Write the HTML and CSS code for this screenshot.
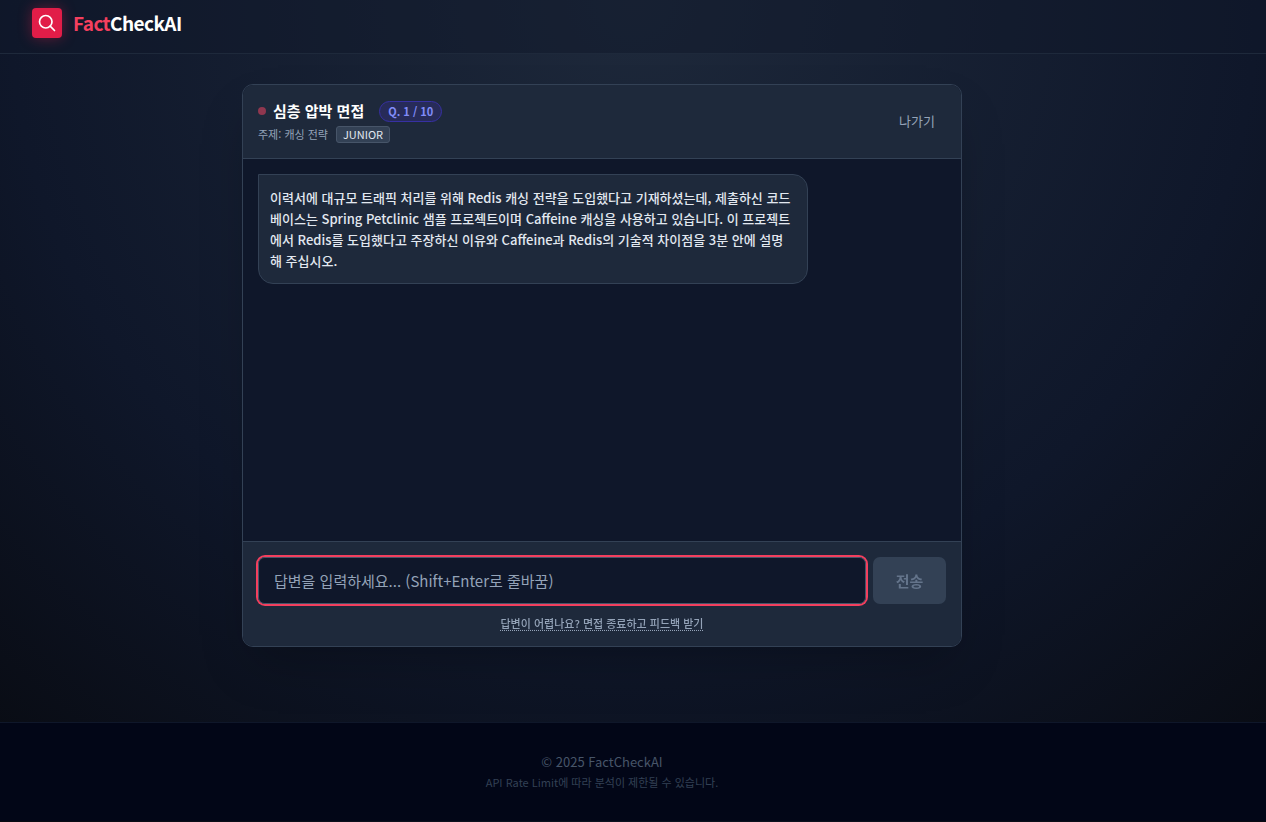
FILE: index.html
```
<!DOCTYPE html>
<html lang="ko">
<head>
  <meta charset="UTF-8">
  <meta name="viewport" content="width=device-width, initial-scale=1.0">
  <title>FactCheckAI</title>
  <link rel="stylesheet" href="styles.css">
</head>
<body>
  <header class="site-header">
    <a class="logo" href="#">
      <span class="logo-icon">
        <svg viewBox="0 0 24 24" width="20" height="20" fill="none" stroke="currentColor" stroke-width="2" stroke-linecap="round" stroke-linejoin="round">
          <circle cx="10.5" cy="10.5" r="7.5" />
          <path d="M21 21l-5.2-5.2" />
        </svg>
      </span>
      <span class="logo-text"><span class="accent">Fact</span>CheckAI</span>
    </a>
  </header>

  <main class="page">
    <section class="chat">
      <div class="chat-header">
        <div class="chat-info">
          <div class="title-row">
            <span class="dot"></span>
            <h1>심층 압박 면접</h1>
            <span class="counter">Q. 1 / 10</span>
          </div>
          <div class="topic-row">
            <span>주제: 캐싱 전략</span>
            <span class="level">JUNIOR</span>
          </div>
        </div>
        <button type="button" class="exit">나가기</button>
      </div>

      <div class="messages">
        <p class="bubble">이력서에 대규모 트래픽 처리를 위해 Redis 캐싱 전략을 도입했다고 기재하셨는데, 제출하신 코드베이스는 Spring Petclinic 샘플 프로젝트이며 Caffeine 캐싱을 사용하고 있습니다. 이 프로젝트에서 Redis를 도입했다고 주장하신 이유와 Caffeine과 Redis의 기술적 차이점을 3분 안에 설명해 주십시오.</p>
      </div>

      <form class="composer">
        <div class="input-row">
          <textarea rows="1" aria-label="답변" placeholder="답변을 입력하세요... (Shift+Enter로 줄바꿈)"></textarea>
          <button type="submit" class="send" disabled>전송</button>
        </div>
        <button type="button" class="finish">답변이 어렵나요? 면접 종료하고 피드백 받기</button>
      </form>
    </section>
  </main>

  <footer class="site-footer">
    <div class="footer-inner">
      <p>© 2025 FactCheckAI</p>
      <p class="note">API Rate Limit에 따라 분석이 제한될 수 있습니다.</p>
    </div>
  </footer>
</body>
</html>
```
FILE: styles.css
```
* {
  box-sizing: border-box;
}

body {
  margin: 0;
  padding-bottom: 2px;
  min-height: 100vh;
  display: flex;
  flex-direction: column;
  font-family: "Noto Sans CJK KR", "Noto Sans", sans-serif;
  color: #f1f5f9;
  background: radial-gradient(circle at top, #1e293b, #0f172a 60%, #080a10) no-repeat #080a10;
}

h1,
p {
  margin: 0;
}

button,
textarea {
  font-family: inherit;
}

button {
  border: 0;
  background: none;
  cursor: pointer;
}

/* Header */
.site-header {
  padding: 8px 32px 15px;
  background: rgba(15, 23, 42, 0.5);
  border-bottom: 1px solid #1e293b;
}

.logo {
  display: inline-flex;
  align-items: center;
  gap: 11px;
  height: 30px;
  vertical-align: top;
  color: #fff;
  text-decoration: none;
}

.logo-icon {
  display: flex;
  align-items: center;
  justify-content: center;
  width: 30px;
  height: 30px;
  border-radius: 4px;
  background: #e11d48;
  box-shadow: 0 0 14px rgba(225, 29, 72, 0.4);
}

.logo-text {
  font-size: 19px;
  font-weight: 700;
  line-height: 30px;
  letter-spacing: -0.03em;
}

.accent {
  color: #f43f5e;
}

/* Chat card */
.page {
  flex: 1;
  width: 100%;
  max-width: 1204px;
  padding: 30px 32px 75px;
}

.chat {
  display: flex;
  flex-direction: column;
  max-width: 720px;
  min-height: 563px;
  margin: 0 auto;
  overflow: hidden;
  background: #0f172a;
  border: 1px solid #334155;
  border-radius: 11px;
  box-shadow: 0 24px 48px -12px rgba(0, 0, 0, 0.25);
}

.chat-header {
  display: flex;
  align-items: center;
  justify-content: space-between;
  padding: 15px;
  background: #1e293b;
  border-bottom: 1px solid #334155;
}

.chat-info {
  display: flex;
  flex-direction: column;
  gap: 4px;
}

.title-row {
  display: flex;
  align-items: center;
  gap: 7px;
}

.dot {
  width: 8px;
  height: 8px;
  border-radius: 50%;
  background: #8f374f;
}

h1 {
  font-size: 15px;
  font-weight: 700;
  line-height: 22px;
  color: #fff;
}

.counter {
  margin-left: 8px;
  padding: 0 8px;
  font-size: 11px;
  font-weight: 700;
  line-height: 19px;
  color: #818cf8;
  background: #272b59;
  border: 1px solid #3730a3;
  border-radius: 11px;
}

.topic-row {
  display: flex;
  align-items: center;
  gap: 8px;
  font-size: 11px;
  line-height: 17px;
  color: #94a3b8;
}

.level {
  padding: 0 6px;
  line-height: 15px;
  color: #e2e8f0;
  background: #334155;
  border: 1px solid #475569;
  border-radius: 3px;
}

.exit {
  padding: 7px 11px 9px;
  font-size: 13px;
  line-height: 19px;
  color: #94a3b8;
}

.messages {
  flex: 1;
  padding: 15px;
}

.bubble {
  width: 80%;
  padding: 12px 14px 12px 11px;
  font-size: 13px;
  font-weight: 500;
  line-height: 21px;
  color: #e2e8f0;
  background: #1e293b;
  border: 1px solid #334155;
  border-radius: 0 15px 15px 15px;
}

/* Answer box */
.composer {
  display: flex;
  flex-direction: column;
  align-items: center;
  gap: 12px;
  padding: 15px;
  background: #1e293b;
  border-top: 1px solid #334155;
}

.input-row {
  display: flex;
  gap: 7px;
  width: 100%;
}

textarea {
  flex: 1;
  height: 47px;
  padding: 12px 15px;
  font-size: 15px;
  line-height: 22px;
  color: #fff;
  background: #0f172a;
  border: 1px solid #475569;
  border-radius: 7px;
  outline: 0;
  box-shadow: 0 0 0 2px #f43f5e;
  resize: none;
}

textarea::placeholder {
  color: #94a3b8;
}

.send {
  width: 73px;
  padding: 0;
  font-size: 15px;
  font-weight: 700;
  color: #64748b;
  background: #334155;
  border-radius: 7px;
}

.finish {
  padding: 0;
  font-size: 11px;
  font-weight: 500;
  line-height: 15px;
  color: #94a3b8;
  text-decoration: underline dotted;
  text-underline-offset: 2px;
}

/* Footer */
.site-footer {
  padding: 30px 0;
  background: #020617;
  border-top: 1px solid #0f172a;
}

.footer-inner {
  display: flex;
  flex-direction: column;
  gap: 4px;
  max-width: 1204px;
  font-size: 13px;
  line-height: 17px;
  text-align: center;
  color: #475569;
}

.note {
  font-size: 11px;
  color: #334155;
}
```
